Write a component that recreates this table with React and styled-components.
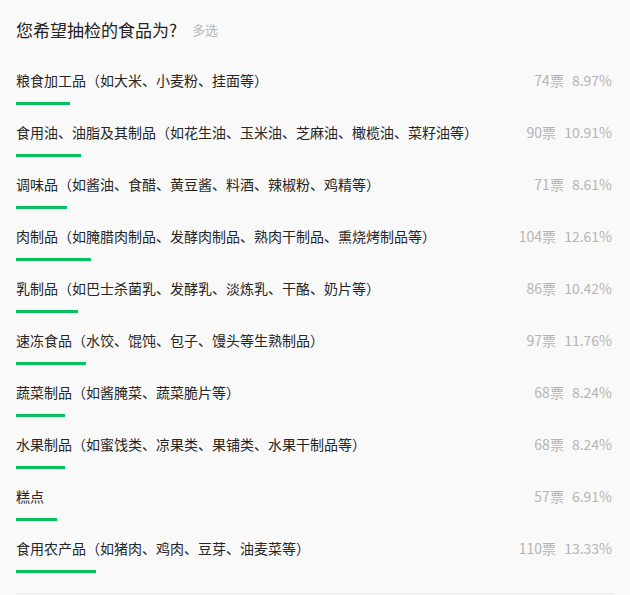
import React from "react";
import styled, { createGlobalStyle } from "styled-components";

const GlobalStyle = createGlobalStyle`
  html, body {
    margin: 0;
    padding: 0;
    background-color: #f9f9f9;
  }

  body {
    font-family: "Noto Sans CJK SC", "Noto Sans", sans-serif;
    -webkit-font-smoothing: antialiased;
  }
`;

const Card = styled.div`
  width: 598px;
  margin: 0 16px;
  padding-bottom: 20px;
  border-bottom: 1px solid #ececec;
`;

const Header = styled.div`
  display: flex;
  align-items: center;
  height: 24px;
  padding: 18px 0 11px;
`;

const Title = styled.h2`
  margin: 0;
  font-size: 17px;
  font-weight: 400;
  line-height: 24px;
  color: #222;
`;

const Tag = styled.span`
  margin-left: 15px;
  font-size: 13px;
  line-height: 24px;
  color: #b8b8b8;
`;

const List = styled.ul`
  margin: 0;
  padding: 0;
  list-style: none;
`;

const Row = styled.li`
  padding-top: 17px;
`;

const Line = styled.div`
  display: flex;
  align-items: center;
  justify-content: space-between;
  height: 20px;
  font-size: 14px;
  line-height: 20px;
`;

const Label = styled.span`
  color: #262626;
  white-space: nowrap;
`;

const Stats = styled.span`
  display: flex;
  gap: 8px;
  padding-right: 2px;
  color: #b4b4b4;
  white-space: nowrap;
`;

const Track = styled.div`
  margin-top: 12px;
  height: 3px;
`;

const Bar = styled.div`
  height: 100%;
  background-color: #07c160;
`;

const options = [
  { text: "粮食加工品（如大米、小麦粉、挂面等）", votes: 74, rate: 8.97 },
  { text: "食用油、油脂及其制品（如花生油、玉米油、芝麻油、橄榄油、菜籽油等）", votes: 90, rate: 10.91 },
  { text: "调味品（如酱油、食醋、黄豆酱、料酒、辣椒粉、鸡精等）", votes: 71, rate: 8.61 },
  { text: "肉制品（如腌腊肉制品、发酵肉制品、熟肉干制品、熏烧烤制品等）", votes: 104, rate: 12.61 },
  { text: "乳制品（如巴士杀菌乳、发酵乳、淡炼乳、干酪、奶片等）", votes: 86, rate: 10.42 },
  { text: "速冻食品（水饺、馄饨、包子、馒头等生熟制品）", votes: 97, rate: 11.76 },
  { text: "蔬菜制品（如酱腌菜、蔬菜脆片等）", votes: 68, rate: 8.24 },
  { text: "水果制品（如蜜饯类、凉果类、果铺类、水果干制品等）", votes: 68, rate: 8.24 },
  { text: "糕点", votes: 57, rate: 6.91 },
  { text: "食用农产品（如猪肉、鸡肉、豆芽、油麦菜等）", votes: 110, rate: 13.33 },
];

export default function App() {
  return (
    <>
      <GlobalStyle />
      <Card>
        <Header>
          <Title>您希望抽检的食品为?</Title>
          <Tag>多选</Tag>
        </Header>
        <List>
          {options.map((item) => (
            <Row key={item.text}>
              <Line>
                <Label>{item.text}</Label>
                <Stats>
                  <span>{`${item.votes}票`}</span>
                  <span>{`${item.rate.toFixed(2)}%`}</span>
                </Stats>
              </Line>
              <Track>
                <Bar style={{ width: `${item.rate}%` }} />
              </Track>
            </Row>
          ))}
        </List>
      </Card>
    </>
  );
}
